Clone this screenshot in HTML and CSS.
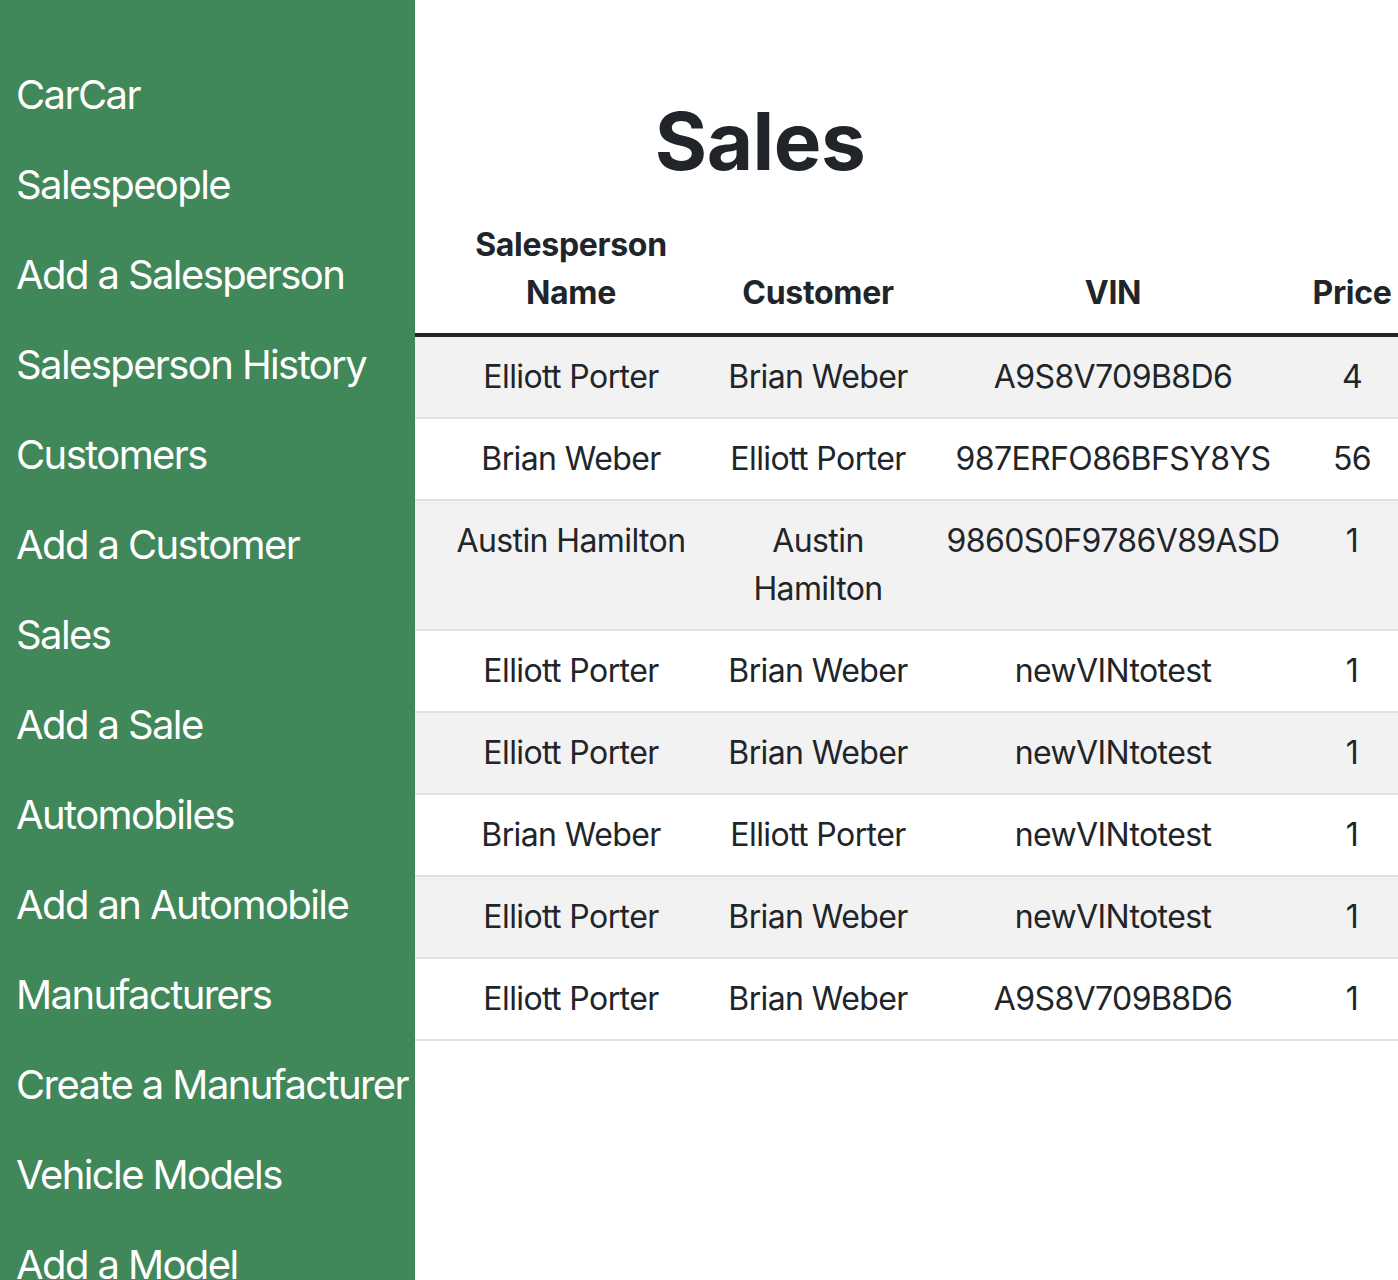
FILE: index.html
```html
<!DOCTYPE html>
<html lang="en">
<head>
<meta charset="utf-8">
<title>CarCar – Sales</title>
<link rel="stylesheet" href="styles.css">
</head>
<body>
<div class="layout">
  <nav class="sidebar">
    <a class="nav-link" href="#">CarCar</a>
    <a class="nav-link" href="#">Salespeople</a>
    <a class="nav-link" href="#">Add a Salesperson</a>
    <a class="nav-link" href="#">Salesperson History</a>
    <a class="nav-link" href="#">Customers</a>
    <a class="nav-link" href="#">Add a Customer</a>
    <a class="nav-link" href="#">Sales</a>
    <a class="nav-link" href="#">Add a Sale</a>
    <a class="nav-link" href="#">Automobiles</a>
    <a class="nav-link" href="#">Add an Automobile</a>
    <a class="nav-link" href="#">Manufacturers</a>
    <a class="nav-link" href="#">Create a Manufacturer</a>
    <a class="nav-link" href="#">Vehicle Models</a>
    <a class="nav-link" href="#">Add a Model</a>
  </nav>
  <main class="main">
    <h1 class="page-title">Sales</h1>
    <table class="sales-table">
      <colgroup>
        <col class="col-person">
        <col class="col-customer">
        <col class="col-vin">
        <col class="col-price">
      </colgroup>
      <thead>
        <tr>
          <th class="c1">Salesperson<br>Name</th>
          <th class="c2">Customer</th>
          <th>VIN</th>
          <th>Price</th>
        </tr>
      </thead>
      <tbody>
        <tr><td class="c1">Elliott Porter</td><td class="c2">Brian Weber</td><td>A9S8V709B8D6</td><td>4</td></tr>
        <tr><td class="c1">Brian Weber</td><td class="c2">Elliott Porter</td><td>987ERFO86BFSY8YS</td><td>56</td></tr>
        <tr><td class="c1">Austin Hamilton</td><td class="c2">Austin Hamilton</td><td>9860S0F9786V89ASD</td><td>1</td></tr>
        <tr><td class="c1">Elliott Porter</td><td class="c2">Brian Weber</td><td>newVINtotest</td><td>1</td></tr>
        <tr><td class="c1">Elliott Porter</td><td class="c2">Brian Weber</td><td>newVINtotest</td><td>1</td></tr>
        <tr><td class="c1">Brian Weber</td><td class="c2">Elliott Porter</td><td>newVINtotest</td><td>1</td></tr>
        <tr><td class="c1">Elliott Porter</td><td class="c2">Brian Weber</td><td>newVINtotest</td><td>1</td></tr>
        <tr><td class="c1">Elliott Porter</td><td class="c2">Brian Weber</td><td>A9S8V709B8D6</td><td>1</td></tr>
      </tbody>
    </table>
  </main>
</div>
</body>
</html>
```
FILE: styles.css
```css
html, body {
  margin: 0;
  padding: 0;
  height: 100%;
  overflow: hidden;
}
body {
  font-family: Inter, "Noto Sans", "Liberation Sans", sans-serif;
  color: #212529;
  background: #fff;
}
.layout {
  display: flex;
  height: 100vh;
  overflow: hidden;
}
.sidebar {
  flex: 0 0 415px;
  width: 415px;
  background: #408759;
  display: flex;
  flex-direction: column;
  padding-top: 50px;
  box-sizing: border-box;
  overflow: hidden;
}
.nav-link {
  display: block;
  color: #fff;
  text-decoration: none;
  font-size: 40px;
  line-height: 60px;
  padding: 15px 0 15px 16px;
  white-space: nowrap;
  letter-spacing: -1.6px;
}
.main {
  flex: 1 1 auto;
  min-width: 0;
}
.page-title {
  margin: 93px 0 16px 0;
  width: 690px;
  text-align: center;
  font-size: 80px;
  line-height: 96px;
  font-weight: 700;
  letter-spacing: -0.5px;
}
.sales-table {
  width: 983px;
  table-layout: fixed;
  border-collapse: collapse;
  font-size: 32px;
  line-height: 48px;
}
.col-person { width: 301px; }
.col-customer { width: 204px; }
.col-vin { width: 386px; }
.col-price { width: 92px; }
.sales-table th,
.sales-table td {
  padding: 16px 4px;
  text-align: center;
  letter-spacing: -0.6px;
}
.sales-table th {
  font-weight: 700;
  vertical-align: bottom;
  border-bottom: 4px solid #212529;
  letter-spacing: -0.3px;
}
.sales-table td {
  vertical-align: top;
  border-bottom: 2px solid #dee2e6;
}
.sales-table .c1 {
  padding-left: 11px;
  padding-right: 0;
}
.sales-table .c2 {
  padding-left: 8px;
  padding-right: 8px;
}
.sales-table tbody tr:nth-child(odd) td {
  background: #f2f2f2;
}
```
